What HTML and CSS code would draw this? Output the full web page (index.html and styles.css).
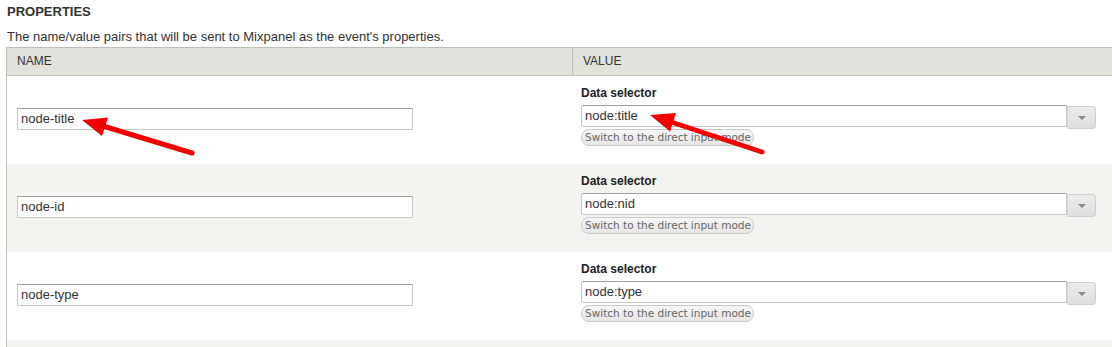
FILE: index.html
```html
<!DOCTYPE html>
<html>
<head>
<meta charset="utf-8">
<link rel="stylesheet" href="styles.css">
</head>
<body>
<div class="page">
  <h2 class="title">PROPERTIES</h2>
  <p class="desc">The name/value pairs that will be sent to Mixpanel as the event's properties.</p>
  <div class="table">
    <div class="thead">
      <div class="th">NAME</div>
      <div class="th th-value">VALUE</div>
    </div>
    <div class="row">
      <div class="cell-name"><div class="text-input">node-title</div></div>
      <div class="cell-value">
        <div class="label">Data selector</div>
        <div class="combo"><div class="text-input wide">node:title</div><div class="dropdown"><span class="caret"></span></div></div>
        <div class="switch">Switch to the direct input mode</div>
      </div>
    </div>
    <div class="row even">
      <div class="cell-name"><div class="text-input">node-id</div></div>
      <div class="cell-value">
        <div class="label">Data selector</div>
        <div class="combo"><div class="text-input wide">node:nid</div><div class="dropdown"><span class="caret"></span></div></div>
        <div class="switch">Switch to the direct input mode</div>
      </div>
    </div>
    <div class="row">
      <div class="cell-name"><div class="text-input">node-type</div></div>
      <div class="cell-value">
        <div class="label">Data selector</div>
        <div class="combo"><div class="text-input wide">node:type</div><div class="dropdown"><span class="caret"></span></div></div>
        <div class="switch">Switch to the direct input mode</div>
      </div>
    </div>
    <div class="row even tail"></div>
  </div>
  <svg class="arrows" width="1112" height="347" viewBox="0 0 1112 347">
    <line x1="192" y1="153" x2="103" y2="126" stroke="#f20000" stroke-width="5" stroke-linecap="round"/>
    <polygon points="82,120 108,117.5 102,136" fill="#f20000"/>
    <line x1="762" y1="152" x2="671" y2="122" stroke="#f20000" stroke-width="5" stroke-linecap="round"/>
    <polygon points="650,115 676,113 670,131.5" fill="#f20000"/>
  </svg>
</div>
</body>
</html>
```
FILE: styles.css
```css
html, body {
  margin: 0;
  padding: 0;
  background: #fff;
  overflow: hidden;
}
body {
  font-family: "Liberation Sans", Arial, sans-serif;
  color: #333;
}
.page {
  position: relative;
  width: 1112px;
  height: 347px;
  overflow: hidden;
}
.title {
  margin: 0;
  padding: 4px 0 0 7px;
  font-size: 13px;
  line-height: 16px;
  font-weight: bold;
  color: #333;
}
.desc {
  margin: 9px 0 0 7px;
  font-size: 13px;
  line-height: 15px;
  color: #333;
}
.table {
  margin: 3px 0 0 6px;
  width: 1120px;
  border-left: 1px solid #bebfb9;
}
.thead {
  display: grid;
  grid-template-columns: 565px 1fr;
  background: #e1e2dc;
  border-top: 1px solid #bebfb9;
  border-bottom: 1px solid #bebfb9;
  height: 27px;
}
.th {
  font-size: 12px;
  line-height: 27px;
  padding-left: 10px;
  color: #333;
}
.th-value {
  border-left: 1px solid #bebfb9;
}
.row {
  display: grid;
  grid-template-columns: 565px 1fr;
  height: 88px;
  background: #fff;
}
.row.even {
  background: #f3f3ef;
}
.row.tail {
  height: 8px;
}
.cell-name {
  padding: 32px 0 0 10px;
}
.cell-value {
  padding: 11px 0 0 9px;
  display: flex;
  flex-direction: column;
  align-items: flex-start;
}
.text-input {
  box-sizing: border-box;
  width: 396px;
  height: 22px;
  border: 1px solid #c8c8c8;
  border-top-color: #a0a0a0;
  background: #fff;
  font-size: 13px;
  line-height: 20px;
  padding: 0 3px;
  color: #333;
}
.label {
  font-size: 12px;
  font-weight: bold;
  line-height: 13px;
  color: #222;
  margin-bottom: 5px;
}
.combo {
  display: flex;
  align-items: flex-start;
}
.text-input.wide {
  width: 486px;
  border-radius: 3px 0 0 3px;
}
.dropdown {
  box-sizing: border-box;
  width: 29px;
  height: 23px;
  margin-top: 1px;
  border: 1px solid #cfcfcf;
  border-left-color: #d8d8d8;
  border-radius: 0 4px 4px 0;
  background: linear-gradient(#ececec, #dedede);
  display: flex;
  align-items: center;
  justify-content: center;
}
.caret {
  width: 0;
  height: 0;
  border-left: 4px solid transparent;
  border-right: 4px solid transparent;
  border-top: 4px solid #8a8a8a;
}
.switch {
  box-sizing: border-box;
  height: 17px;
  margin-top: 0;
  padding: 0 2px 0 3px;
  border: 1px solid #c8c8c8;
  border-radius: 8px;
  background: linear-gradient(#f6f6f6, #e6e6e6);
  font-family: "DejaVu Sans", Verdana, sans-serif;
  font-size: 10.5px;
  line-height: 15px;
  color: #666;
  white-space: nowrap;
}
.arrows {
  position: absolute;
  left: 0;
  top: 0;
  pointer-events: none;
}
```
